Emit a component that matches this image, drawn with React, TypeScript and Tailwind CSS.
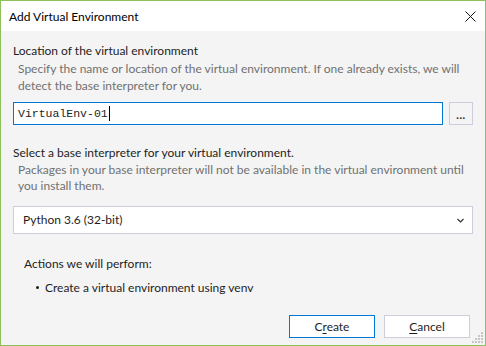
import React from "react";

const ui = { fontFamily: 'Lato, "Noto Sans", sans-serif' };
const mono = { fontFamily: '"Liberation Mono", "DejaVu Sans Mono", monospace' };

function ResizeGrip() {
  const dots: [number, number][] = [];
  for (let r = 0; r < 4; r++) {
    for (let c = 0; c < 4; c++) {
      if (r + c >= 3) dots.push([c * 3, r * 3]);
    }
  }
  return (
    <svg width="12" height="12" viewBox="0 0 12 12" className="absolute right-[1px] bottom-[1px]">
      {dots.map(([x, y], i) => (
        <rect key={i} x={x} y={y} width="2" height="2" fill="#c6c6c6" />
      ))}
    </svg>
  );
}

export default function App() {
  return (
    <div
      className="relative w-[486px] h-[346px] border border-[#8dc15a] flex flex-col bg-[#f4f4f4] text-[#1e1e1e] text-[12px] overflow-hidden"
      style={ui}
    >
      {/* Title bar */}
      <div className="h-[30px] bg-white flex items-center justify-between pl-[8px] pr-[9px] shrink-0">
        <span className="text-[12px] leading-[17px] text-black mt-[1px]">Add Virtual Environment</span>
        <svg width="11" height="11" viewBox="0 0 11 11">
          <path d="M0.5 0.5 L10.5 10.5 M10.5 0.5 L0.5 10.5" stroke="#111" strokeWidth="1" />
        </svg>
      </div>

      {/* Content */}
      <div className="flex-1 flex flex-col px-[12px] pt-[11px] pb-[7px]">
        <div className="leading-[17px] whitespace-nowrap">Location of the virtual environment</div>
        <div className="mt-[1px] pl-[5px] leading-[17px] text-[#717171] whitespace-nowrap">
          Specify the name or location of the virtual environment. If one already exists, we will
          <br />
          detect the base interpreter for you.
        </div>

        <div className="mt-[8px] flex items-center gap-[6px]">
          <div className="flex-1 h-[23px] border border-[#0078d7] bg-white flex items-center pl-[4px]">
            <span className="text-[11.5px] text-[#1e1e1e]" style={mono}>VirtualEnv-01</span>
            <span className="w-[1px] h-[15px] bg-black ml-[1px]"></span>
          </div>
          <div className="w-[24px] h-[23px] border border-[#cccedb] bg-[#f4f4f4] flex items-center justify-center">
            <span className="text-[11px] leading-none mt-[1px] font-bold tracking-[0.5px] text-[#1e1e1e]">...</span>
          </div>
        </div>

        <div className="mt-[19px] leading-[17px] whitespace-nowrap">Select a base interpreter for your virtual environment.</div>
        <div className="mt-[1px] pl-[5px] leading-[16px] text-[#717171] whitespace-nowrap">
          Packages in your base interpreter will not be available in the virtual environment until
          <br />
          you install them.
        </div>

        <div className="mt-[12px] h-[28px] border border-[#cccedb] bg-white flex items-center justify-between pl-[9px] pr-[8px]">
          <span>Python 3.6 (32-bit)</span>
          <svg width="7" height="5" viewBox="0 0 7 5">
            <path d="M0.5 1 L3.5 4 L6.5 1" stroke="#333" strokeWidth="1.2" fill="none" />
          </svg>
        </div>

        <div className="mt-[21px] pl-[11px] leading-[17px]">Actions we will perform:</div>
        <div className="mt-[7px] pl-[23px] flex items-center leading-[17px]">
          <span className="w-[3px] h-[3px] rounded-full bg-[#1e1e1e] mr-[6px]"></span>
          <span>Create a virtual environment using venv</span>
        </div>

        <div className="mt-auto flex justify-end gap-[9px] pr-[3px]">
          <button className="w-[86px] h-[23px] border border-[#0078d7] bg-white flex items-center justify-center leading-none">
            <span className="mt-[1px]">C<u className="underline underline-offset-2">r</u>eate</span>
          </button>
          <button className="w-[86px] h-[23px] border border-[#cccedb] bg-white flex items-center justify-center leading-none">
            <span className="mt-[1px]"><u className="underline underline-offset-2">C</u>ancel</span>
          </button>
        </div>
      </div>
      <ResizeGrip />
    </div>
  );
}
